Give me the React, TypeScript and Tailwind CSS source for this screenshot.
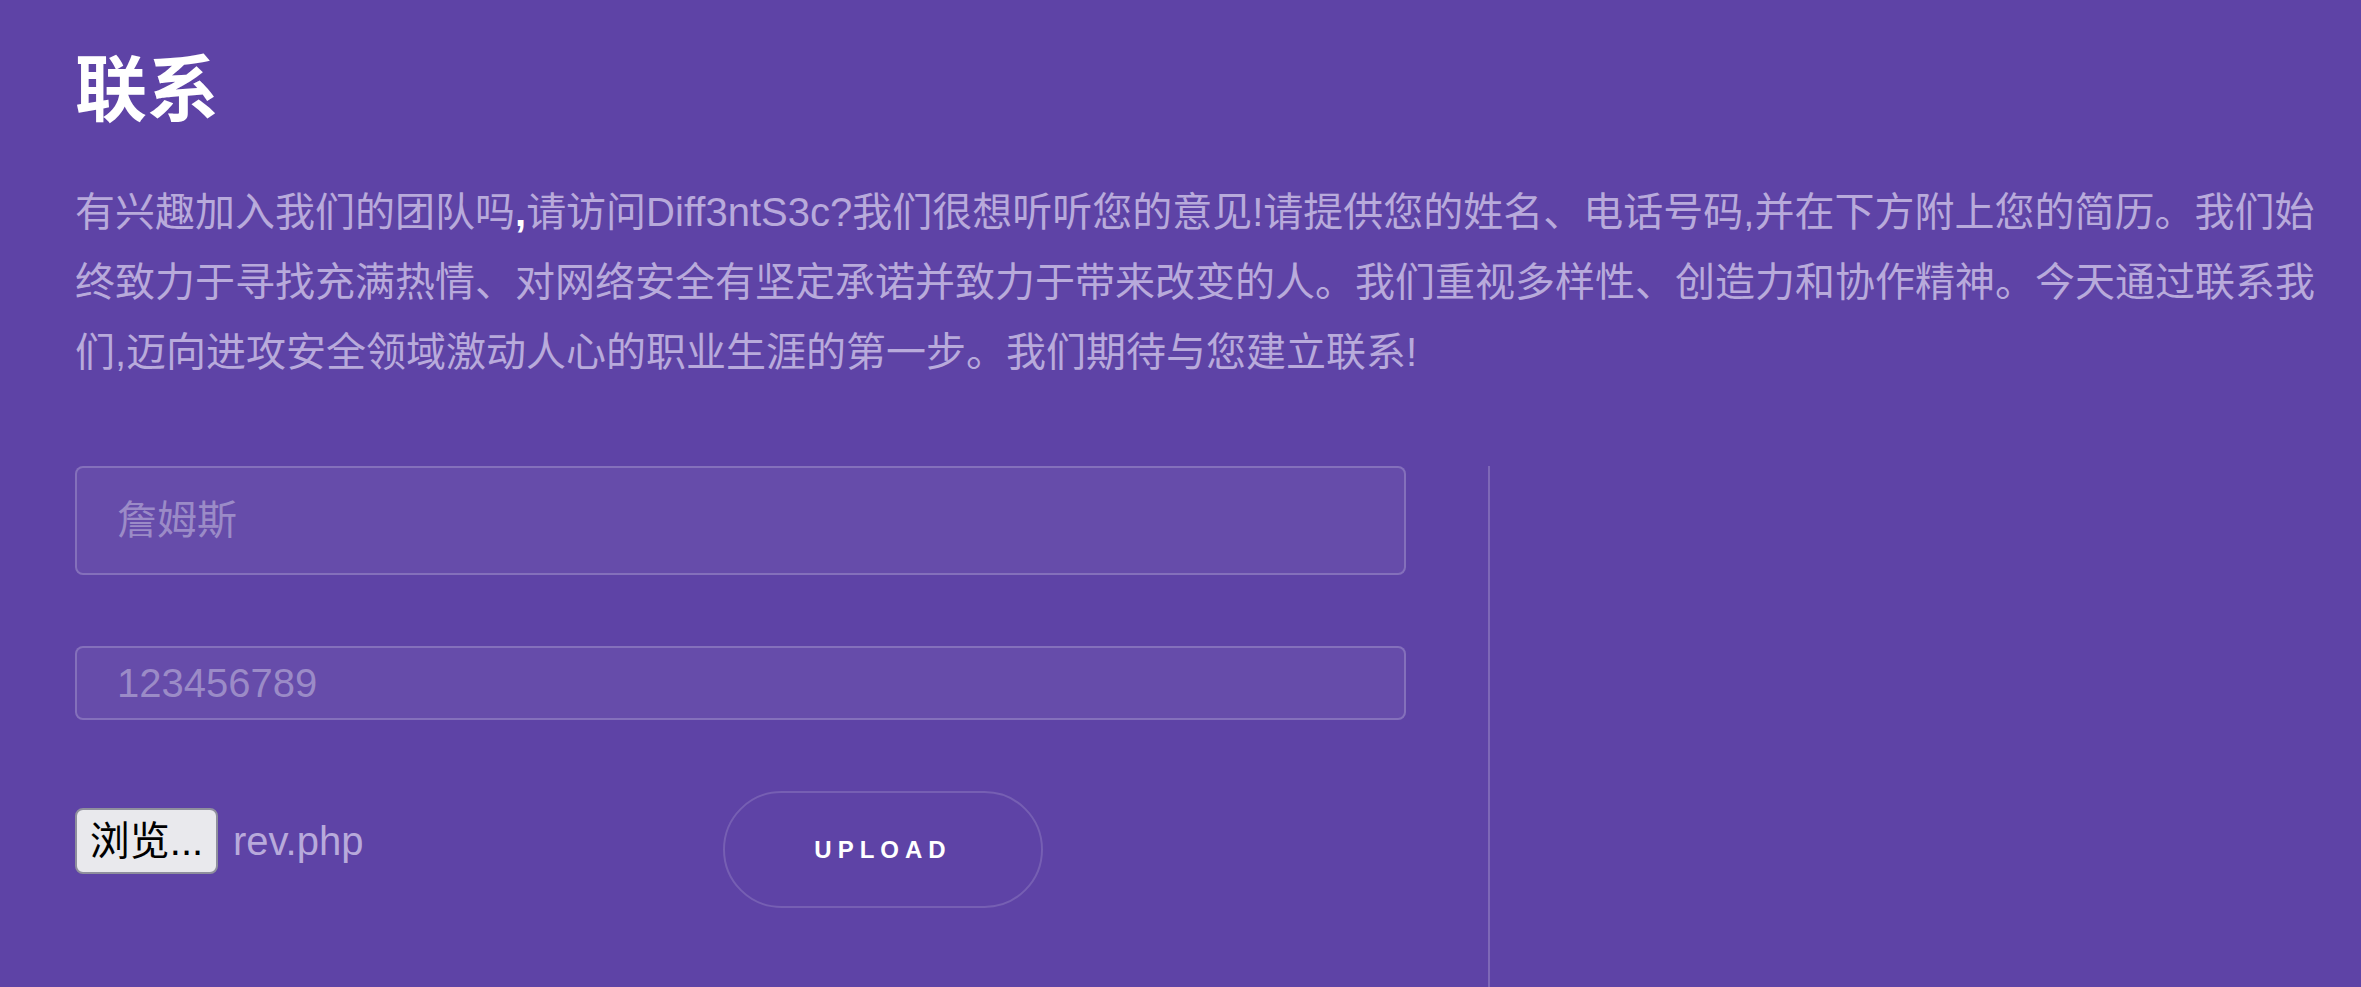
const FONT = "font-['Liberation_Sans','Noto_Sans_CJK_SC',sans-serif]";

export default function App() {
  return (
    <div className={`min-h-screen w-full overflow-hidden bg-[#5e43a6] pl-[75px] pr-[20px] pt-[54px] ${FONT}`}>
      {/* Heading */}
      <h1 className="text-[72px] font-bold leading-none text-white">联系</h1>

      <p className="mt-[51px] text-[40px] leading-[70px] text-[#b8aadb]">
        有兴趣加入我们的团队吗<strong className="font-bold text-white">,</strong>请访问Diff3ntS3c?我们很想听听您的意见!请提供您的姓名、电话号码,并在下方附上您的简历。我们始终致力于寻找充满热情、对网络安全有坚定承诺并致力于带来改变的人。我们重视多样性、创造力和协作精神。今天通过联系我们,迈向进攻安全领域激动人心的职业生涯的第一步。我们期待与您建立联系!
      </p>

      <div className="mt-[79px] flex">
        {/* Form column */}
        <form className="flex w-[1331px] shrink-0 flex-col" onSubmit={(e) => e.preventDefault()}>
          <input
            type="text"
            placeholder="詹姆斯"
            className="h-[109px] w-full rounded-lg border-2 border-white/20 bg-white/5 pl-10 text-[40px] text-white outline-none placeholder:text-[#9b8bc7]"
          />
          <input
            type="text"
            placeholder="123456789"
            className="mt-[71px] h-[74px] w-full rounded-lg border-2 border-white/20 bg-white/5 pl-10 text-[40px] text-white outline-none placeholder:text-[#9b8bc7]"
          />

          <div className="mt-[71px] flex items-start">
            <div className="mt-[17px] flex w-[648px] items-center gap-[15px]">
              <button
                type="button"
                className="h-[66px] w-[143px] rounded-[8px] border-2 border-[#8f8f9d] bg-[#e9e9ed] text-[40px] leading-none text-black"
              >
                浏览...
              </button>
              <span className="text-[40px] leading-none text-[#b8aadb]">rev.php</span>
            </div>
            <button
              type="submit"
              className="h-[117px] w-[320px] rounded-full border-2 border-white/15 text-[24px] font-bold tracking-[0.25em] text-white"
            >
              UPLOAD
            </button>
          </div>
        </form>

        {/* Right column */}
        <div className="ml-[82px] min-h-[560px] flex-1 border-l-2 border-white/20" />
      </div>
    </div>
  );
}
